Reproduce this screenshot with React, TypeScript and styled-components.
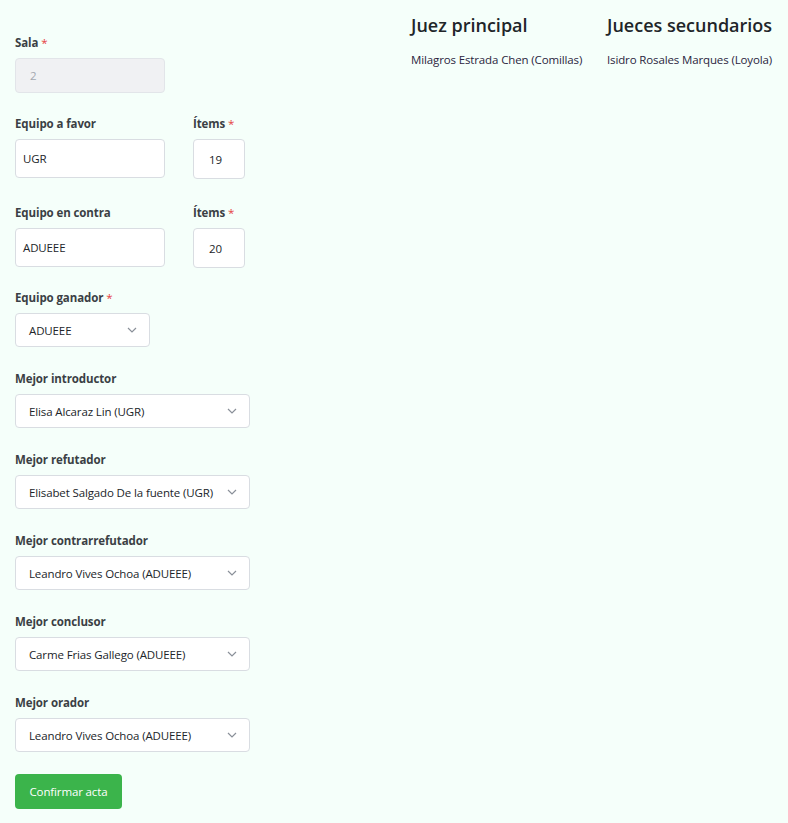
import React from "react";
import styled, { createGlobalStyle } from "styled-components";

const GlobalStyle = createGlobalStyle`
  html, body {
    margin: 0;
    padding: 0;
    background: #f5fffa;
  }
  body {
    font-family: "Open Sans", "Noto Sans", sans-serif;
    color: #212529;
  }
  * { box-sizing: border-box; }
`;

const Page = styled.div`
  display: flex;
  align-items: flex-start;
  min-height: 823px;
`;

const FormColumn = styled.form`
  width: 411px;
  padding: 35px 15px 0 15px;
  display: flex;
  flex-direction: column;
`;

const JudgesColumn = styled.div`
  display: grid;
  grid-template-columns: 196px auto;
  padding-top: 13px;
`;

const JudgeBlock = styled.div`
  display: flex;
  flex-direction: column;
`;

const JudgeTitle = styled.h2`
  margin: 0;
  font-size: 18px;
  font-weight: 600;
  line-height: 24px;
  color: #212529;
`;

const JudgeName = styled.div`
  margin-top: 15px;
  font-size: 11.5px;
  letter-spacing: -0.13px;
  line-height: 16px;
  color: #2b2540;
`;

const Row = styled.div`
  display: flex;
  gap: 28px;
`;

const Field = styled.div<{ $mb?: number }>`
  display: flex;
  flex-direction: column;
  margin-bottom: ${(p) => p.$mb ?? 24}px;
`;

const Label = styled.label`
  font-size: 11.5px;
  letter-spacing: -0.1px;
  font-weight: 700;
  line-height: 16px;
  color: #3b3f45;
  margin-bottom: 7px;
`;

const Req = styled.span`
  color: #e53e3e;
  margin-left: 3px;
  font-weight: 400;
`;

const TextInput = styled.div<{ $w: number; $h: number; $pad: number; $disabled?: boolean }>`
  width: ${(p) => p.$w}px;
  height: ${(p) => p.$h}px;
  padding-left: ${(p) => p.$pad}px;
  display: flex;
  align-items: center;
  font-size: 11.5px;
  letter-spacing: -0.13px;
  border: 1px solid ${(p) => (p.$disabled ? "#e2e5e9" : "#d9dde2")};
  border-radius: 4px;
  background: ${(p) => (p.$disabled ? "#f0f1f3" : "#ffffff")};
  color: ${(p) => (p.$disabled ? "#a3a8b0" : "#212529")};
`;

const SelectBox = styled.div<{ $w: number }>`
  width: ${(p) => p.$w}px;
  height: 34px;
  padding: 0 12px 0 13px;
  display: flex;
  align-items: center;
  justify-content: space-between;
  font-size: 11.5px;
  letter-spacing: -0.13px;
  border: 1px solid #d9dde2;
  border-radius: 4px;
  background: #ffffff;
  color: #212529;
  white-space: nowrap;
`;

const Chevron = () => (
  <svg width="10" height="6" viewBox="0 0 10 6" fill="none">
    <path d="M1 1l4 4 4-4" stroke="#8a9099" strokeWidth="1.2" />
  </svg>
);

const Button = styled.button`
  margin-top: -2px;
  width: 107px;
  height: 35px;
  border: none;
  border-radius: 4px;
  background: #3bb44b;
  color: #ffffff;
  font-family: inherit;
  font-size: 11.5px;
  letter-spacing: -0.13px;
  font-weight: 500;
  cursor: pointer;
`;

const Select = ({ w, value }: { w: number; value: string }) => (
  <SelectBox $w={w}>
    <span>{value}</span>
    <Chevron />
  </SelectBox>
);

const bests: [string, string][] = [
  ["Mejor introductor", "Elisa Alcaraz Lin (UGR)"],
  ["Mejor refutador", "Elisabet Salgado De la fuente (UGR)"],
  ["Mejor contrarrefutador", "Leandro Vives Ochoa (ADUEEE)"],
  ["Mejor conclusor", "Carme Frias Gallego (ADUEEE)"],
  ["Mejor orador", "Leandro Vives Ochoa (ADUEEE)"],
];

export default function App() {
  return (
    <>
      <GlobalStyle />
      <Page>
        <FormColumn onSubmit={(e) => e.preventDefault()}>
          <Field $mb={23}>
            <Label>
              Sala<Req>*</Req>
            </Label>
            <TextInput $w={150} $h={35} $pad={14} $disabled>
              2
            </TextInput>
          </Field>
          <Row>
            <Field $mb={26}>
              <Label>Equipo a favor</Label>
              <TextInput $w={150} $h={39} $pad={7}>
                UGR
              </TextInput>
            </Field>
            <Field $mb={26}>
              <Label>
                Ítems<Req>*</Req>
              </Label>
              <TextInput $w={52} $h={40} $pad={15}>
                19
              </TextInput>
            </Field>
          </Row>
          <Row>
            <Field $mb={22}>
              <Label>Equipo en contra</Label>
              <TextInput $w={150} $h={39} $pad={7}>
                ADUEEE
              </TextInput>
            </Field>
            <Field $mb={22}>
              <Label>
                Ítems<Req>*</Req>
              </Label>
              <TextInput $w={52} $h={40} $pad={15}>
                20
              </TextInput>
            </Field>
          </Row>
          <Field>
            <Label>
              Equipo ganador<Req>*</Req>
            </Label>
            <Select w={135} value="ADUEEE" />
          </Field>
          {bests.map(([label, value]) => (
            <Field key={label}>
              <Label>{label}</Label>
              <Select w={235} value={value} />
            </Field>
          ))}
          <Button type="submit">Confirmar acta</Button>
        </FormColumn>
        <JudgesColumn>
          <JudgeBlock>
            <JudgeTitle>Juez principal</JudgeTitle>
            <JudgeName>Milagros Estrada Chen (Comillas)</JudgeName>
          </JudgeBlock>
          <JudgeBlock>
            <JudgeTitle>Jueces secundarios</JudgeTitle>
            <JudgeName>Isidro Rosales Marques (Loyola)</JudgeName>
          </JudgeBlock>
        </JudgesColumn>
      </Page>
    </>
  );
}
